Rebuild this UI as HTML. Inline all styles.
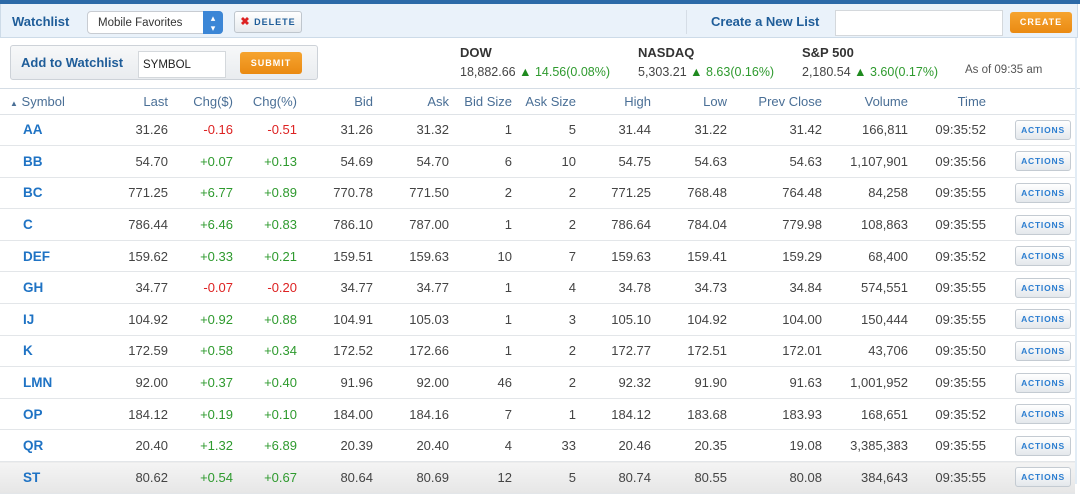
<!DOCTYPE html>
<html><head><meta charset="utf-8"><style>
*{margin:0;padding:0;box-sizing:border-box}
body{width:1080px;height:484px;overflow:hidden;background:#fff;font-family:"Liberation Sans",Arial,sans-serif;color:#444;position:relative}
.topbar{position:absolute;left:0;top:0;width:1080px;height:4px;background:#2c6aa8}
.tool{position:absolute;left:0;top:4px;width:1078px;height:34px;background:#eaf2fa;border-bottom:1px solid #cddbe8;border-left:1px solid #cddbe8;border-right:1px solid #cddbe8}
.lbl{position:absolute;font-weight:bold;color:#1f5d99;font-size:13px}
.sel{position:absolute;left:87px;top:11px;width:136px;height:23px;background:#fff;border:1px solid #c8ccd2;border-radius:4px;font-size:11.5px;color:#333;padding:5px 10px}
.sel .ar{position:absolute;right:-1px;top:-1px;width:20px;height:23px;background:#3b86d6;border-radius:0 4px 4px 0;color:#fff;font-size:9px;text-align:center;line-height:10px;padding-top:2px}
.btn{position:absolute;border:1px solid #bfc6cd;border-radius:3px;background:linear-gradient(#fff,#e6eaee);font-size:9px;font-weight:bold;letter-spacing:1px;text-align:center}
.obtn{position:absolute;border-radius:3px;background:linear-gradient(#f6a430,#ea8a12);color:#fff;font-size:9px;font-weight:bold;letter-spacing:1px;text-align:center}
.inp{position:absolute;background:#fff;border:1px solid #d4d8dc;font-size:11px;color:#222}
.addbox{position:absolute;left:10px;top:45px;width:308px;height:35px;border:1px solid #cdd2d8;border-radius:3px;background:linear-gradient(#f7f8f9,#e9ecef)}
.idx{position:absolute;font-size:12.5px;color:#444;line-height:19px}
.idx b{color:#333;font-size:13px}
.g{color:#2e9a2e}.r{color:#d22}
.tri{color:#1f8a1f}
.hdrline{position:absolute;left:0;top:88px;width:1080px;height:1px;background:#d5dde5}
table{position:absolute;left:0;top:89px;border-collapse:collapse;table-layout:fixed;width:1075px;font-size:13px}
td,th{text-align:right;white-space:nowrap;padding:0}
th{height:25px;font-weight:normal;color:#4a6f96;font-size:13px;border-bottom:1px solid #dfe3e7}
td{height:31.6px;border-bottom:1px solid #e3e6e9;color:#444}
td.s{text-align:left;padding-left:23px;color:#1f73c4;font-weight:bold;font-size:13.5px}
th.s{text-align:left;padding-left:10px}
tr.last td{background:linear-gradient(#f4f4f4,#e6e6e6)}
.ab{display:inline-block;width:56px;height:20px;border:1px solid #c4cbd2;border-radius:3px;background:linear-gradient(#fff,#e4e8ec);color:#2a7dd0;font-size:8.5px;font-weight:bold;letter-spacing:.8px;line-height:18px;text-align:center;margin-right:4px}
.rb{position:absolute;left:1075px;top:38px;width:2px;height:446px;background:#e2ecf5}
</style></head><body>
<div class="topbar"></div>
<div class="tool"></div>
<div class="lbl" style="left:12px;top:14px">Watchlist</div>
<div class="sel">Mobile Favorites<div class="ar">▴<br>▾</div></div>
<div class="btn" style="left:234px;top:11px;width:68px;height:22px;line-height:20px;color:#1f5d99"><span style="color:#d22;font-size:11px">✖</span> DELETE</div>
<div style="position:absolute;left:686px;top:10px;width:1px;height:24px;background:#d5dde6"></div>
<div class="lbl" style="left:711px;top:14px">Create a New List</div>
<div class="inp" style="left:835px;top:10px;width:168px;height:26px"></div>
<div class="obtn" style="left:1010px;top:12px;width:62px;height:21px;line-height:21px">CREATE</div>
<div class="addbox"></div>
<div class="lbl" style="left:21px;top:55px">Add to Watchlist</div>
<div class="inp" style="left:138px;top:51px;width:88px;height:27px;padding:7px 4px;font-size:11.5px">SYMBOL</div>
<div class="obtn" style="left:240px;top:52px;width:62px;height:22px;line-height:22px">SUBMIT</div>
<div class="idx" style="left:460px;top:43px"><b>DOW</b><br>18,882.66 <span class="tri">▲</span> <span class="g">14.56(0.08%)</span></div>
<div class="idx" style="left:638px;top:43px"><b>NASDAQ</b><br>5,303.21 <span class="tri">▲</span> <span class="g">8.63(0.16%)</span></div>
<div class="idx" style="left:802px;top:43px"><b>S&amp;P 500</b><br>2,180.54 <span class="tri">▲</span> <span class="g">3.60(0.17%)</span></div>
<div style="position:absolute;left:965px;top:64px;font-size:11.5px;color:#555">As of 09:35 am</div>
<div class="hdrline"></div>
<div class="rb"></div>
<table>
<colgroup><col style="width:110px"><col style="width:58px"><col style="width:65px"><col style="width:64px"><col style="width:76px"><col style="width:76px"><col style="width:63px"><col style="width:64px"><col style="width:75px"><col style="width:76px"><col style="width:95px"><col style="width:86px"><col style="width:78px"><col style="width:89px"></colgroup>
<tr><th class="s"><span style="font-size:8px">▲</span> Symbol</th><th>Last</th><th>Chg($)</th><th>Chg(%)</th><th>Bid</th><th>Ask</th><th>Bid Size</th><th>Ask Size</th><th>High</th><th>Low</th><th>Prev Close</th><th>Volume</th><th>Time</th><th></th></tr>
<tr><td class="s">AA</td><td>31.26</td><td class="r">-0.16</td><td class="r">-0.51</td><td>31.26</td><td>31.32</td><td>1</td><td>5</td><td>31.44</td><td>31.22</td><td>31.42</td><td>166,811</td><td>09:35:52</td><td><span class="ab">ACTIONS</span></td></tr>
<tr><td class="s">BB</td><td>54.70</td><td class="g">+0.07</td><td class="g">+0.13</td><td>54.69</td><td>54.70</td><td>6</td><td>10</td><td>54.75</td><td>54.63</td><td>54.63</td><td>1,107,901</td><td>09:35:56</td><td><span class="ab">ACTIONS</span></td></tr>
<tr><td class="s">BC</td><td>771.25</td><td class="g">+6.77</td><td class="g">+0.89</td><td>770.78</td><td>771.50</td><td>2</td><td>2</td><td>771.25</td><td>768.48</td><td>764.48</td><td>84,258</td><td>09:35:55</td><td><span class="ab">ACTIONS</span></td></tr>
<tr><td class="s">C</td><td>786.44</td><td class="g">+6.46</td><td class="g">+0.83</td><td>786.10</td><td>787.00</td><td>1</td><td>2</td><td>786.64</td><td>784.04</td><td>779.98</td><td>108,863</td><td>09:35:55</td><td><span class="ab">ACTIONS</span></td></tr>
<tr><td class="s">DEF</td><td>159.62</td><td class="g">+0.33</td><td class="g">+0.21</td><td>159.51</td><td>159.63</td><td>10</td><td>7</td><td>159.63</td><td>159.41</td><td>159.29</td><td>68,400</td><td>09:35:52</td><td><span class="ab">ACTIONS</span></td></tr>
<tr><td class="s">GH</td><td>34.77</td><td class="r">-0.07</td><td class="r">-0.20</td><td>34.77</td><td>34.77</td><td>1</td><td>4</td><td>34.78</td><td>34.73</td><td>34.84</td><td>574,551</td><td>09:35:55</td><td><span class="ab">ACTIONS</span></td></tr>
<tr><td class="s">IJ</td><td>104.92</td><td class="g">+0.92</td><td class="g">+0.88</td><td>104.91</td><td>105.03</td><td>1</td><td>3</td><td>105.10</td><td>104.92</td><td>104.00</td><td>150,444</td><td>09:35:55</td><td><span class="ab">ACTIONS</span></td></tr>
<tr><td class="s">K</td><td>172.59</td><td class="g">+0.58</td><td class="g">+0.34</td><td>172.52</td><td>172.66</td><td>1</td><td>2</td><td>172.77</td><td>172.51</td><td>172.01</td><td>43,706</td><td>09:35:50</td><td><span class="ab">ACTIONS</span></td></tr>
<tr><td class="s">LMN</td><td>92.00</td><td class="g">+0.37</td><td class="g">+0.40</td><td>91.96</td><td>92.00</td><td>46</td><td>2</td><td>92.32</td><td>91.90</td><td>91.63</td><td>1,001,952</td><td>09:35:55</td><td><span class="ab">ACTIONS</span></td></tr>
<tr><td class="s">OP</td><td>184.12</td><td class="g">+0.19</td><td class="g">+0.10</td><td>184.00</td><td>184.16</td><td>7</td><td>1</td><td>184.12</td><td>183.68</td><td>183.93</td><td>168,651</td><td>09:35:52</td><td><span class="ab">ACTIONS</span></td></tr>
<tr><td class="s">QR</td><td>20.40</td><td class="g">+1.32</td><td class="g">+6.89</td><td>20.39</td><td>20.40</td><td>4</td><td>33</td><td>20.46</td><td>20.35</td><td>19.08</td><td>3,385,383</td><td>09:35:55</td><td><span class="ab">ACTIONS</span></td></tr>
<tr class="last"><td class="s">ST</td><td>80.62</td><td class="g">+0.54</td><td class="g">+0.67</td><td>80.64</td><td>80.69</td><td>12</td><td>5</td><td>80.74</td><td>80.55</td><td>80.08</td><td>384,643</td><td>09:35:55</td><td><span class="ab">ACTIONS</span></td></tr>
</table>
</body></html>
